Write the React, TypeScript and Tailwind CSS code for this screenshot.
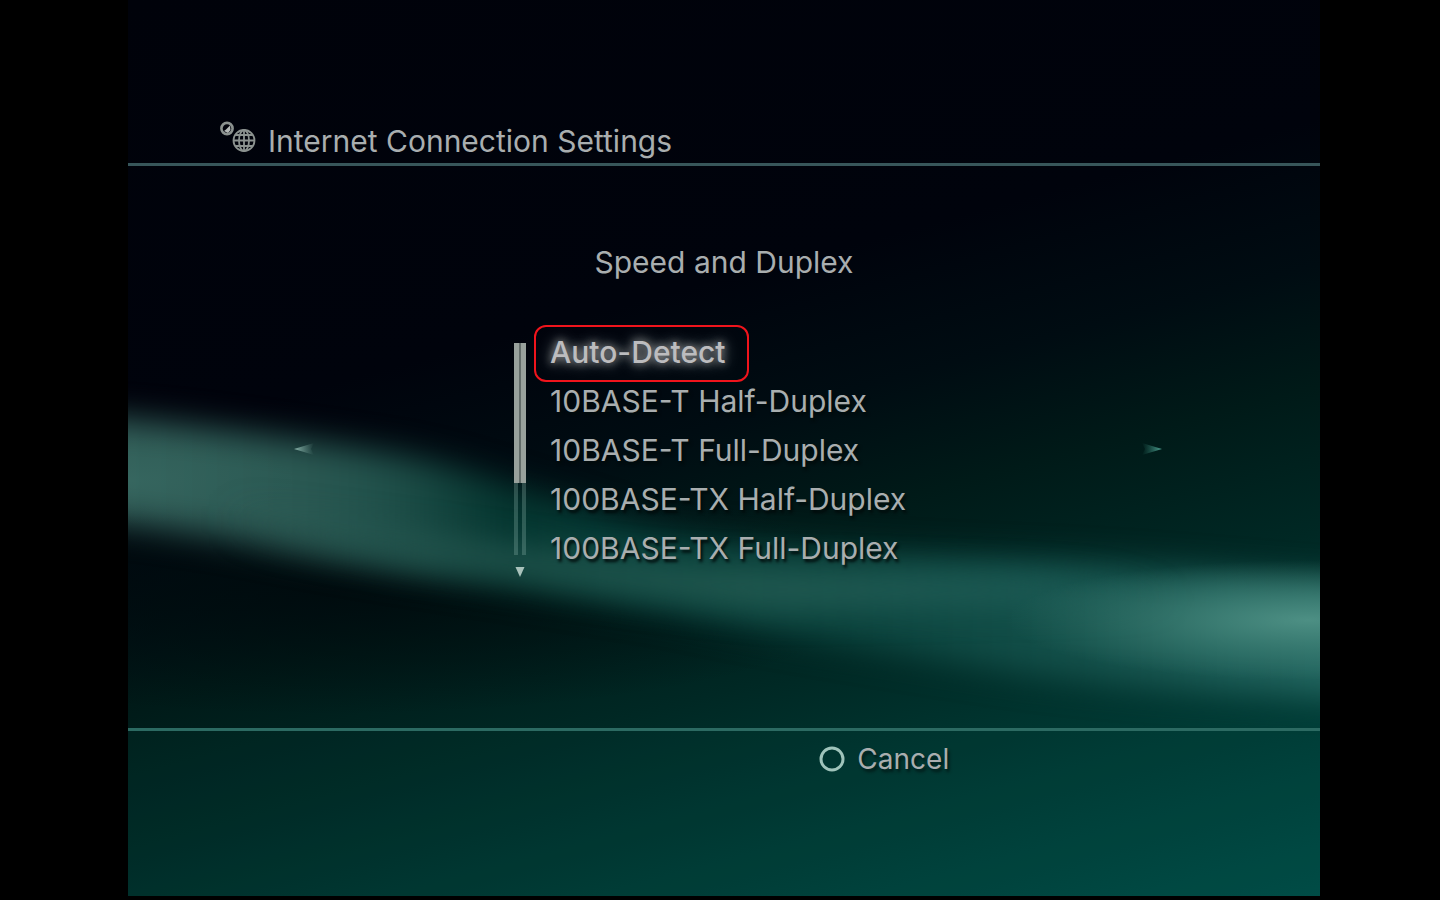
import React, { useState } from 'react';

const SPEED_OPTIONS = [
  'Auto-Detect',
  '10BASE-T Half-Duplex',
  '10BASE-T Full-Duplex',
  '100BASE-TX Half-Duplex',
  '100BASE-TX Full-Duplex',
];

// Ribbon of light behind the menus
const WaveBackground = () => (
  <svg
    className="absolute inset-0 h-full w-full"
    viewBox="0 0 1192 896"
    preserveAspectRatio="none"
    aria-hidden="true"
  >
    <defs>
      <linearGradient id="ribbon" x1="0" y1="0" x2="1192" y2="0" gradientUnits="userSpaceOnUse">
        <stop offset="0" stopColor="#325f59" />
        <stop offset="0.15" stopColor="#2a5852" />
        <stop offset="0.22" stopColor="#1f4f49" />
        <stop offset="0.32" stopColor="#04352f" />
        <stop offset="0.42" stopColor="#063e39" />
        <stop offset="0.6" stopColor="#0b443e" />
        <stop offset="0.8" stopColor="#13504a" />
        <stop offset="1" stopColor="#226660" />
      </linearGradient>
      <linearGradient id="lower" x1="0" y1="0" x2="1192" y2="0" gradientUnits="userSpaceOnUse">
        <stop offset="0.08" stopColor="#2c5c55" stopOpacity="0" />
        <stop offset="0.25" stopColor="#24564f" stopOpacity="0.9" />
        <stop offset="0.5" stopColor="#21584f" stopOpacity="1" />
        <stop offset="0.75" stopColor="#1f5d57" stopOpacity="0.9" />
        <stop offset="0.88" stopColor="#2c7069" stopOpacity="0" />
      </linearGradient>
      <radialGradient id="shine">
        <stop offset="0" stopColor="#529488" stopOpacity="0.9" />
        <stop offset="1" stopColor="#458579" stopOpacity="0" />
      </radialGradient>
      <radialGradient id="shade">
        <stop offset="0" stopColor="#000a0d" stopOpacity="0.85" />
        <stop offset="1" stopColor="#000a0d" stopOpacity="0" />
      </radialGradient>
      <filter id="soft" x="-20%" y="-50%" width="140%" height="200%" colorInterpolationFilters="sRGB">
        <feGaussianBlur stdDeviation="16" />
      </filter>
    </defs>
    <ellipse cx="200" cy="590" rx="560" ry="125" fill="url(#shade)" />
    <path
      filter="url(#soft)"
      fill="url(#ribbon)"
      d="M-60 415 C60 423 150 436 260 453 C340 466 410 495 500 522 C620 550 800 556 940 562 C1040 567 1140 578 1260 586 L1260 700 C1140 694 1000 690 880 672 C740 650 640 634 540 612 C400 589 260 569 160 550 C80 534 0 523 -60 518 Z"
    />
    <path
      filter="url(#soft)"
      fill="url(#lower)"
      d="M80 500 C240 530 400 552 560 566 C720 572 860 572 980 582 L1100 604 C860 602 740 610 640 610 C460 590 240 560 80 530 Z"
    />
    <ellipse cx="1180" cy="620" rx="300" ry="60" fill="url(#shine)" />
    <ellipse cx="0" cy="480" rx="170" ry="44" fill="url(#shine)" opacity="0.15" />
  </svg>
);

const NetworkIcon = () => (
  <svg className="h-8 w-9 shrink-0" viewBox="0 0 36 32" fill="none" stroke="#8b928f" aria-hidden="true">
    <circle cx="7" cy="7.5" r="5.6" strokeWidth="2.6" />
    <path d="M4 10 L6 8.5 L10 4.5 L10.5 9 L8 12 Z" fill="#b4b9b7" stroke="none" />
    <g strokeWidth="1.8">
      <circle cx="24" cy="19.5" r="10.5" />
      <ellipse cx="24" cy="19.5" rx="5" ry="10.5" />
      <path d="M24 9 V30 M13.5 19.5 H34.5 M15.5 14 H32.5 M15.5 25 H32.5" />
    </g>
  </svg>
);

const Scrollbar = () => (
  <div className="flex w-3 flex-col items-center pt-3.5" aria-hidden="true">
    <div className="flex h-[140px] w-full justify-between bg-[#626c69]">
      <span className="w-[5px] bg-[#98a19c]" />
      <span className="w-[5px] bg-[#98a19c]" />
    </div>
    <div className="flex h-[72px] w-full justify-between">
      <span className="w-1 bg-[#8fb5ab]/30" />
      <span className="w-1 bg-[#8fb5ab]/30" />
    </div>
    <svg className="mt-3 h-2.5 w-2.5" viewBox="0 0 10 10">
      <path d="M0.5 0 H9.5 L5 10 Z" fill="#a9c2bb" />
    </svg>
  </div>
);

const App = () => {
  const [selected, setSelected] = useState('Auto-Detect');

  return (
    <div className="flex min-h-screen bg-black pr-[120px] pb-1 pl-32 font-['Inter','Noto_Sans',sans-serif] text-[30px] leading-8 text-[#a9aeaf]">
      <div className="relative isolate flex flex-1 flex-col overflow-hidden bg-[linear-gradient(165deg,#00020a_0%,#00030c_36%,#000c12_48%,#001a18_58%,#002824_70%,#003b35_84%,#004e48_100%)]">
        <div className="absolute inset-0 -z-10">
          <WaveBackground />
        </div>

        {/* Header */}
        <header className="border-b-3 border-[#37565a] pt-[121px] pb-1.5 pl-[92px]">
          <div className="flex items-start gap-3">
            <NetworkIcon />
            <h1 className="pt-1">Internet Connection Settings</h1>
          </div>
        </header>

        {/* Speed and duplex menu */}
        <main className="flex flex-1 flex-col pt-20">
          <h2 className="text-center">Speed and Duplex</h2>
          <div className="mt-[51px] grid grid-cols-[386fr_420fr_386fr] items-center">
            <button className="justify-self-start pb-2 pl-[166px]" aria-label="Previous">
              <svg className="h-3 w-5" viewBox="0 0 20 12">
                <defs>
                  <linearGradient id="prev">
                    <stop offset="0" stopColor="#8db5ac" />
                    <stop offset="1" stopColor="#6f9c93" stopOpacity="0" />
                  </linearGradient>
                </defs>
                <path d="M0 6 L20 0 L17 6 L20 12 Z" fill="url(#prev)" />
              </svg>
            </button>
            <div className="flex gap-6">
              <Scrollbar />
              <ul className="flex flex-col">
                {SPEED_OPTIONS.map(option => (
                  <li key={option} className="relative">
                    <button
                      className={`h-[49px] pb-1 text-left whitespace-nowrap ${
                        selected === option
                          ? 'font-medium text-[#bcbcbe] [text-shadow:0_0_8px_#a0a0a0,0_0_16px_#8c9696]'
                          : '[text-shadow:2px_3px_3px_#000a0a]'
                      }`}
                      onClick={() => setSelected(option)}
                    >
                      {option}
                    </button>
                    {option === 'Auto-Detect' && (
                      <span className="pointer-events-none absolute -inset-y-1 -left-4 w-[215px] rounded-xl border-2 border-[#f0141c]" />
                    )}
                  </li>
                ))}
              </ul>
            </div>
            <button className="justify-self-end pr-[158px] pb-2" aria-label="Next">
              <svg className="h-3 w-5" viewBox="0 0 20 12">
                <defs>
                  <linearGradient id="next">
                    <stop offset="0" stopColor="#2f7a6c" stopOpacity="0" />
                    <stop offset="1" stopColor="#4fa091" />
                  </linearGradient>
                </defs>
                <path d="M20 6 L0 0 L3 6 L0 12 Z" fill="url(#next)" />
              </svg>
            </button>
          </div>
        </main>

        {/* Footer */}
        <footer className="h-[168px] border-t-3 border-[#2c6a62] bg-[#00403a]/15 pt-3 pl-[58%] text-[28px]">
          <button className="flex items-center gap-3 [text-shadow:2px_3px_3px_#001a18]">
            <svg className="h-[26px] w-[26px]" viewBox="0 0 26 26" fill="none">
              <circle cx="13" cy="13" r="11" stroke="#9fc4bb" strokeWidth="3" />
            </svg>
            Cancel
          </button>
        </footer>
      </div>
    </div>
  );
};

export default App;
